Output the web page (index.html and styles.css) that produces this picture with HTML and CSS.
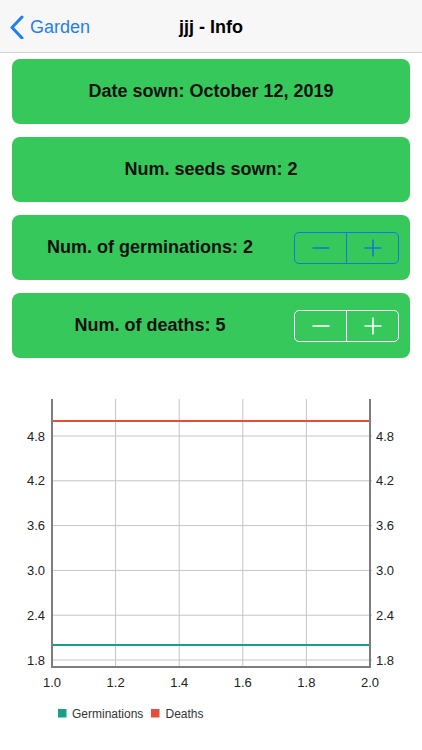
FILE: index.html
```html
<!DOCTYPE html>
<html>
<head>
<meta charset="utf-8">
<link rel="stylesheet" href="styles.css">
</head>
<body>
<header class="nav">
  <a class="back">
    <svg class="chev" width="16" height="24" viewBox="0 0 16 24"><path d="M13 2 L3 12.5 L13 23" fill="none" stroke="#1e7ff0" stroke-width="3" stroke-linecap="round" stroke-linejoin="round"/></svg>
    <span>Garden</span>
  </a>
  <h1 class="title">jjj - Info</h1>
</header>
<main class="cards">
  <div class="card"><span class="label">Date sown: October 12, 2019</span></div>
  <div class="card"><span class="label">Num. seeds sown: 2</span></div>
  <div class="card with-stepper">
    <span class="label">Num. of germinations: 2</span>
    <div class="stepper blue">
      <button class="seg"><svg width="18" height="18" viewBox="0 0 18 18"><path d="M0.5 9 H17.5" stroke="currentColor" stroke-width="1.6"/></svg></button>
      <button class="seg"><svg width="18" height="18" viewBox="0 0 18 18"><path d="M0.5 9 H17.5 M9 0.5 V17.5" stroke="currentColor" stroke-width="1.6"/></svg></button>
    </div>
  </div>
  <div class="card with-stepper">
    <span class="label">Num. of deaths: 5</span>
    <div class="stepper white">
      <button class="seg"><svg width="18" height="18" viewBox="0 0 18 18"><path d="M0.5 9 H17.5" stroke="currentColor" stroke-width="1.6"/></svg></button>
      <button class="seg"><svg width="18" height="18" viewBox="0 0 18 18"><path d="M0.5 9 H17.5 M9 0.5 V17.5" stroke="currentColor" stroke-width="1.6"/></svg></button>
    </div>
  </div>
</main>
<section class="chart">
<svg width="422" height="392" viewBox="0 358 422 392">
  <g stroke="#c4c4c4" stroke-width="1">
    <line x1="115.6" y1="399" x2="115.6" y2="667"/>
    <line x1="179.2" y1="399" x2="179.2" y2="667"/>
    <line x1="242.8" y1="399" x2="242.8" y2="667"/>
    <line x1="306.4" y1="399" x2="306.4" y2="667"/>
    <line x1="52" y1="436" x2="372" y2="436"/>
    <line x1="52" y1="480.8" x2="372" y2="480.8"/>
    <line x1="52" y1="525.6" x2="372" y2="525.6"/>
    <line x1="52" y1="570.4" x2="372" y2="570.4"/>
    <line x1="52" y1="615.2" x2="372" y2="615.2"/>
    <line x1="52" y1="660" x2="372" y2="660"/>
  </g>
  <line x1="52" y1="421.1" x2="370" y2="421.1" stroke="#e74c3c" stroke-width="2"/>
  <line x1="52" y1="645.1" x2="370" y2="645.1" stroke="#16a085" stroke-width="2"/>
  <g stroke="#7d7d7d" stroke-width="2" fill="none">
    <path d="M52 399 V667 H370 V399"/>
  </g>
  <g class="ylab" text-anchor="end">
    <text x="45" y="440.5">4.8</text>
    <text x="45" y="485.3">4.2</text>
    <text x="45" y="530.1">3.6</text>
    <text x="45" y="574.9">3.0</text>
    <text x="45" y="619.7">2.4</text>
    <text x="45" y="664.5">1.8</text>
  </g>
  <g class="ylab" text-anchor="start">
    <text x="376" y="440.5">4.8</text>
    <text x="376" y="485.3">4.2</text>
    <text x="376" y="530.1">3.6</text>
    <text x="376" y="574.9">3.0</text>
    <text x="376" y="619.7">2.4</text>
    <text x="376" y="664.5">1.8</text>
  </g>
  <g class="xlab" text-anchor="middle">
    <text x="52" y="686.5">1.0</text>
    <text x="115.6" y="686.5">1.2</text>
    <text x="179.2" y="686.5">1.4</text>
    <text x="242.8" y="686.5">1.6</text>
    <text x="306.4" y="686.5">1.8</text>
    <text x="370" y="686.5">2.0</text>
  </g>
  <rect x="58" y="709" width="8.5" height="8.5" fill="#16a085"/>
  <text class="legend" x="72" y="717.5">Germinations</text>
  <rect x="151" y="709" width="8.5" height="8.5" fill="#e74c3c"/>
  <text class="legend" x="165.5" y="717.5">Deaths</text>
</svg>
</section>
</body>
</html>
```
FILE: styles.css
```css
html, body {
  margin: 0;
  padding: 0;
  background: #ffffff;
}
body {
  width: 422px;
  height: 750px;
  overflow: hidden;
  font-family: "Liberation Sans", Arial, sans-serif;
}
.nav {
  height: 52px;
  background: #f7f7f7;
  border-bottom: 1px solid #d3d3d3;
  display: flex;
  align-items: center;
  justify-content: center;
  position: relative;
}
.back {
  position: absolute;
  left: 9px;
  top: 15px;
  display: flex;
  align-items: center;
  gap: 5px;
  color: #1e7ff0;
  font-size: 18px;
}
.back span {
  line-height: 24px;
}
.title {
  margin: 0;
  font-size: 18px;
  font-weight: bold;
  color: #000;
  line-height: 24px;
  padding-top: 2px;
}
.cards {
  padding: 6px 12px 0;
  display: flex;
  flex-direction: column;
  gap: 13px;
}
.card {
  height: 65px;
  background: #36c85b;
  border-radius: 8px;
  display: flex;
  align-items: center;
  justify-content: center;
}
.label {
  font-size: 18px;
  font-weight: bold;
  color: #111;
}
.with-stepper {
  padding-right: 11px;
}
.with-stepper .label {
  flex: 1;
  text-align: center;
}
.stepper {
  margin-left: 6px;
  width: 105px;
  height: 32px;
  box-sizing: border-box;
  border: 1px solid currentColor;
  border-radius: 5px;
  display: flex;
}
.stepper.blue { color: #1478d8; }
.stepper.white { color: #ffffff; }
.seg {
  flex: 1;
  background: none;
  border: none;
  padding: 0;
  margin: 0;
  color: inherit;
  display: flex;
  align-items: center;
  justify-content: center;
}
.seg + .seg {
  border-left: 1px solid currentColor;
}
.chart {
  margin-top: 0;
}
.chart svg {
  display: block;
}
.ylab text, .xlab text {
  font-family: "Liberation Sans", Arial, sans-serif;
  font-size: 13px;
  fill: #222;
}
.legend {
  font-family: "Liberation Sans", Arial, sans-serif;
  font-size: 12px;
  fill: #333;
}
```
